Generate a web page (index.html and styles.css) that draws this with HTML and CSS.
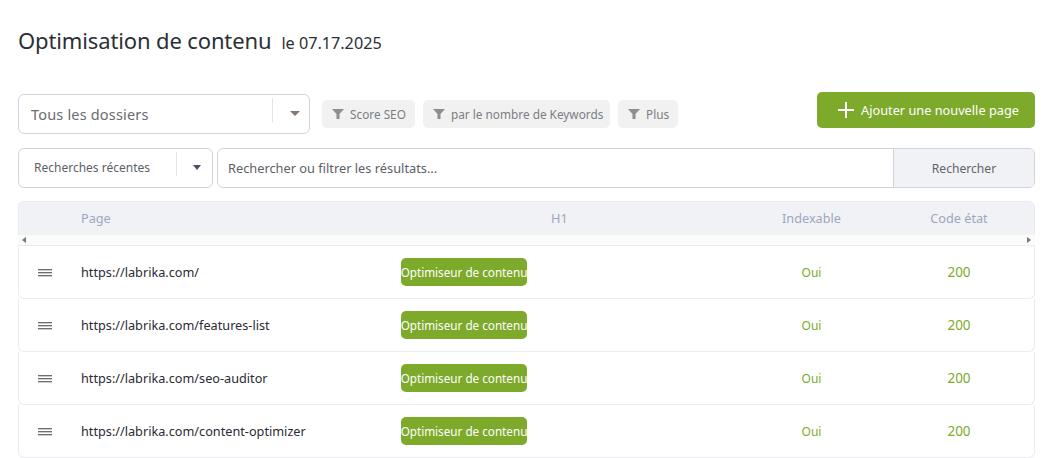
FILE: index.html
```html
<!DOCTYPE html>
<html lang="fr">
<head>
<meta charset="utf-8">
<title>Optimisation de contenu</title>
<link rel="stylesheet" href="styles.css">
</head>
<body>
<main class="page">
  <header class="title-row">
    <h1 class="title">Optimisation de contenu</h1>
    <span class="date">le 07.17.2025</span>
  </header>

  <section class="toolbar">
    <div class="folder-select">
      <span class="folder-label">Tous les dossiers</span>
      <span class="select-arrow arrow-brown"></span>
    </div>
    <div class="chips">
      <button class="chip"><svg class="funnel" viewBox="0 0 12 10"><path d="M0 0h12L7.5 5v5h-3V5z"/></svg>Score SEO</button>
      <button class="chip"><svg class="funnel" viewBox="0 0 12 10"><path d="M0 0h12L7.5 5v5h-3V5z"/></svg>par le nombre de Keywords</button>
      <button class="chip"><svg class="funnel" viewBox="0 0 12 10"><path d="M0 0h12L7.5 5v5h-3V5z"/></svg>Plus</button>
    </div>
    <button class="add-btn"><svg class="plus" viewBox="0 0 16 16"><path d="M7 0h2v7h7v2H9v7H7V9H0V7h7z"/></svg>Ajouter une nouvelle page</button>
  </section>

  <section class="search-row">
    <div class="recent">
      <span class="recent-label">Recherches récentes</span>
      <span class="select-arrow arrow-dark"></span>
    </div>
    <div class="search">
      <span class="search-input">Rechercher ou filtrer les résultats...</span>
      <button class="search-btn">Rechercher</button>
    </div>
  </section>

  <section class="table">
    <div class="thead grid">
      <span></span>
      <span>Page</span>
      <span class="h1-head">H1</span>
      <span class="center">Indexable</span>
      <span class="center">Code état</span>
    </div>
    <div class="scrollbar"><i class="tri tri-left"></i><i class="tri tri-right"></i></div>
    <div class="row grid">
      <span class="burger"><i></i><i></i><i></i></span>
      <span class="url">https://labrika.com/</span>
      <span><a class="badge">Optimiseur de contenu</a></span>
      <span class="center oui">Oui</span>
      <span class="center code">200</span>
    </div>
    <div class="row grid">
      <span class="burger"><i></i><i></i><i></i></span>
      <span class="url">https://labrika.com/features-list</span>
      <span><a class="badge">Optimiseur de contenu</a></span>
      <span class="center oui">Oui</span>
      <span class="center code">200</span>
    </div>
    <div class="row grid">
      <span class="burger"><i></i><i></i><i></i></span>
      <span class="url">https://labrika.com/seo-auditor</span>
      <span><a class="badge">Optimiseur de contenu</a></span>
      <span class="center oui">Oui</span>
      <span class="center code">200</span>
    </div>
    <div class="row grid">
      <span class="burger"><i></i><i></i><i></i></span>
      <span class="url">https://labrika.com/content-optimizer</span>
      <span><a class="badge">Optimiseur de contenu</a></span>
      <span class="center oui">Oui</span>
      <span class="center code">200</span>
    </div>
  </section>
</main>
</body>
</html>
```
FILE: styles.css
```css
* { box-sizing: border-box; }
html, body { margin: 0; background: #fff; overflow: hidden; }
body { font-family: "Noto Sans", "Open Sans", sans-serif; color: #2b3037; }
button { font-family: inherit; border: 0; margin: 0; }
.page { width: 1046px; height: 458px; padding: 24px 11px 0 18px; }

.title-row { display: flex; align-items: baseline; gap: 10px; height: 32px; }
.title { margin: 0; font-size: 22px; letter-spacing: -.13px; font-weight: 400; line-height: 32px; color: #2b3037; }
.date { font-size: 16.2px; color: #2b3037; }

.toolbar { display: flex; align-items: flex-start; margin-top: 38px; height: 42px; }
.folder-select { position: relative; width: 292px; height: 40px; border: 1px solid #d3d3e0; border-radius: 6px; display: flex; align-items: center; padding-left: 12px; }
.folder-label { font-size: 14.5px; color: #6a6c72; letter-spacing: .18px; }
.select-arrow { position: absolute; top: 50%; width: 0; height: 0; border-left: 5px solid transparent; border-right: 5px solid transparent; border-top: 5px solid; margin-top: -3px; }
.select-arrow::before { content: ""; position: absolute; top: -18px; left: -23px; width: 1px; height: 24px; background: #e3e3ea; }
.arrow-brown { right: 9px; color: #86786c; }
.arrow-dark { right: 11px; border-left-width: 4.5px; border-right-width: 4.5px; color: #4a4f63; }
.arrow-dark::before { left: -21px; }
.chips { display: grid; grid-template-columns: 93px 187px 60px; gap: 8px; margin: 6px 0 0 12px; }
.chip { display: flex; align-items: center; height: 28px; padding: 0 0 0 10px; background: #f1f1f1; border-radius: 5px; font-size: 11.8px; color: #7c7d84; white-space: nowrap; }
.funnel { width: 12px; height: 10px; margin-right: 6px; fill: #8e8e8e; }
.add-btn { display: flex; align-items: center; margin-left: auto; margin-top: -2px; width: 218px; height: 36px; padding-left: 21px; background: #7daa2b; color: #fff; border-radius: 5px; font-size: 12.75px; white-space: nowrap; }
.plus { width: 16px; height: 16px; margin-right: 7px; fill: #fff; }

.search-row { display: flex; gap: 4px; margin-top: 12px; height: 40px; }
.recent { position: relative; width: 195px; height: 40px; border: 1px solid #d3d3e0; border-radius: 6px; display: flex; align-items: center; padding: 0 0 2px 15px; }
.recent-label { font-size: 12px; color: #5d5f66; }
.search { flex: 1; display: flex; border: 1px solid #d3d3e0; border-radius: 6px; overflow: hidden; }
.search-input { flex: 1; align-self: center; padding-left: 10px; font-size: 12.8px; color: #5d5f66; }
.search-btn { width: 141px; background: #f1f2f5; border-left: 1px solid #d3d3e0; font-size: 12.1px; color: #5f636e; }

.table { margin-top: 13px; }
.grid { display: grid; grid-template-columns: 63px 320px 337px 145px 150px; align-items: center; }
.thead { height: 34px; padding-bottom: 2px; background: #f1f2f5; border: 1px solid #e9ecf4; border-bottom: 0; border-radius: 6px 6px 0 0; font-size: 12.7px; color: #9ea6c0; }
.thead > span:nth-child(2) { margin-left: -1px; }
.h1-head { padding-left: 149px; }
.center { text-align: center; }
.scrollbar { display: flex; justify-content: space-between; align-items: center; height: 11px; padding: 0 4px; background: #fbfbfb; border-bottom: 1px solid #e9ecf4; }
.tri { width: 0; height: 0; border-top: 3px solid transparent; border-bottom: 3px solid transparent; }
.tri-left { border-right: 4px solid #777; }
.tri-right { border-left: 4px solid #777; }
.row { height: 53px; background: #fff; border: 1px solid #e9ecf4; border-top: 0; border-radius: 0 0 6px 6px; font-size: 12.7px; }
.burger { display: flex; flex-direction: column; gap: 2px; width: 14px; margin-left: 19px; }
.burger i { display: block; height: 1px; background: #6d6d72; box-shadow: 0 .5px 0 #9a9a9e; }
.url { color: #2b2a35; margin-left: -1px; }
.badge { display: inline-flex; align-items: center; justify-content: center; width: 126px; height: 28px; margin-left: -1px; background: #7daa2b; color: #fff; border-radius: 5px; font-size: 11.7px; white-space: nowrap; }
.oui { color: #7daa2b; font-size: 12px; }
.code { color: #7daa2b; font-size: 13.5px; }
```
